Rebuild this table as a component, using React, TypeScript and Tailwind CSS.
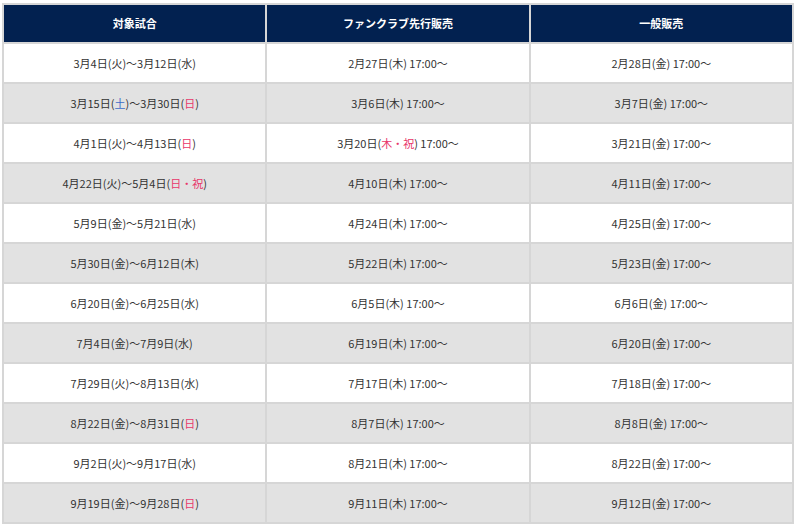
import React from 'react';

type Part = { t: string; c?: 'blue' | 'red' };

const B = (t: string): Part => ({ t, c: 'blue' });
const R = (t: string): Part => ({ t, c: 'red' });
const P = (t: string): Part => ({ t });

const rows: Part[][][] = [
  [[P('3月4日(火)〜3月12日(水)')], [P('2月27日(木) 17:00〜')], [P('2月28日(金) 17:00〜')]],
  [[P('3月15日('), B('土'), P(')〜3月30日('), R('日'), P(')')], [P('3月6日(木) 17:00〜')], [P('3月7日(金) 17:00〜')]],
  [[P('4月1日(火)〜4月13日('), R('日'), P(')')], [P('3月20日('), R('木・祝'), P(') 17:00〜')], [P('3月21日(金) 17:00〜')]],
  [[P('4月22日(火)〜5月4日('), R('日・祝'), P(')')], [P('4月10日(木) 17:00〜')], [P('4月11日(金) 17:00〜')]],
  [[P('5月9日(金)〜5月21日(水)')], [P('4月24日(木) 17:00〜')], [P('4月25日(金) 17:00〜')]],
  [[P('5月30日(金)〜6月12日(木)')], [P('5月22日(木) 17:00〜')], [P('5月23日(金) 17:00〜')]],
  [[P('6月20日(金)〜6月25日(水)')], [P('6月5日(木) 17:00〜')], [P('6月6日(金) 17:00〜')]],
  [[P('7月4日(金)〜7月9日(水)')], [P('6月19日(木) 17:00〜')], [P('6月20日(金) 17:00〜')]],
  [[P('7月29日(火)〜8月13日(水)')], [P('7月17日(木) 17:00〜')], [P('7月18日(金) 17:00〜')]],
  [[P('8月22日(金)〜8月31日('), R('日'), P(')')], [P('8月7日(木) 17:00〜')], [P('8月8日(金) 17:00〜')]],
  [[P('9月2日(火)〜9月17日(水)')], [P('8月21日(木) 17:00〜')], [P('8月22日(金) 17:00〜')]],
  [[P('9月19日(金)〜9月28日('), R('日'), P(')')], [P('9月11日(木) 17:00〜')], [P('9月12日(金) 17:00〜')]],
];

const Cell: React.FC<{ parts: Part[] }> = ({ parts }) => (
  <td className="border-2 border-[#d6d6d6] text-center align-middle">
    {parts.map((p, i) => (
      <span
        key={i}
        className={p.c === 'blue' ? 'text-[#3d6cc8]' : p.c === 'red' ? 'text-[#e8366b]' : ''}
      >
        {p.t}
      </span>
    ))}
  </td>
);

export default function App() {
  return (
    <div
      className="w-[796px] h-[526px] bg-white pt-[3px] pl-[2px] overflow-hidden"
      style={{ fontFamily: '"Noto Sans CJK JP", "Noto Sans", sans-serif' }}
    >
      <table className="w-[792px] table-fixed border-collapse text-[11px] text-[#333333]">
        <thead>
          <tr className="h-[39px] bg-[#022150] text-white font-bold">
            <th className="border-2 border-[#d6d6d6]">対象試合</th>
            <th className="border-2 border-[#d6d6d6]">ファンクラブ先行販売</th>
            <th className="border-2 border-[#d6d6d6]">一般販売</th>
          </tr>
        </thead>
        <tbody>
          {rows.map((r, i) => (
            <tr key={i} className={`h-[40px] ${i % 2 === 1 ? 'bg-[#e2e2e2]' : 'bg-white'}`}>
              {r.map((c, j) => (
                <Cell key={j} parts={c} />
              ))}
            </tr>
          ))}
        </tbody>
      </table>
    </div>
  );
}
